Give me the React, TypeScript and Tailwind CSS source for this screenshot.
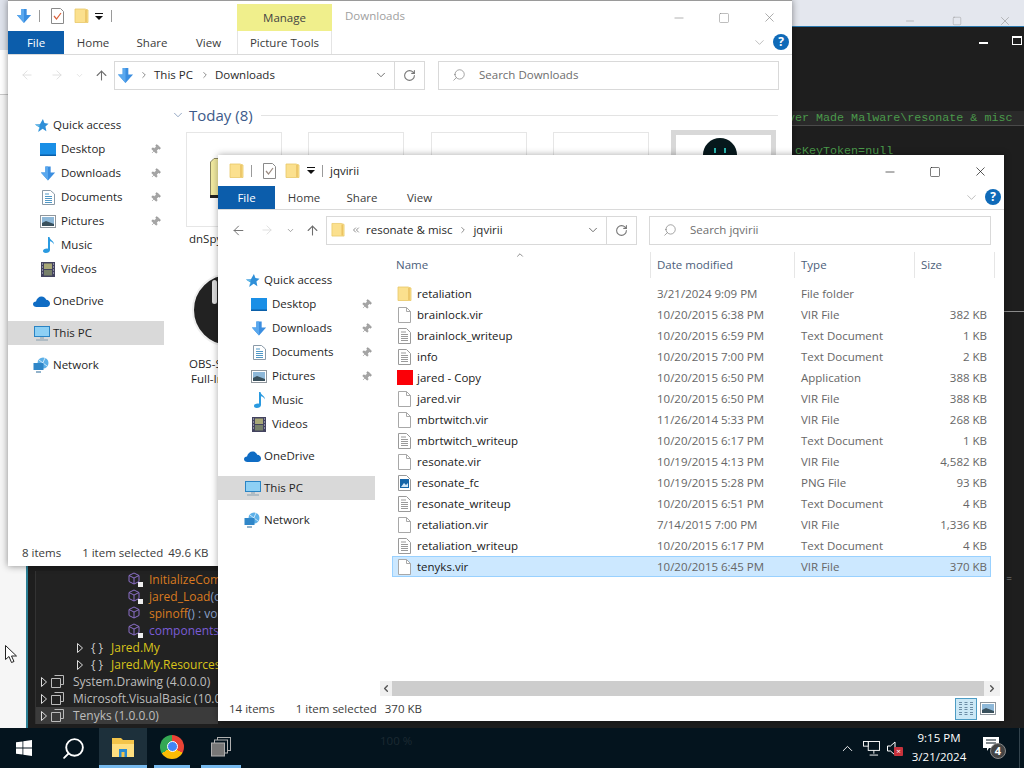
import React from "react";
import { ArrowLeft, ArrowRight, ArrowUp, ChevronDown, ChevronRight, ChevronUp, ChevronLeft, RotateCw, Search, Minus, Square, X, Pin, ChevronsLeft } from "lucide-react";

const FolderIcon = ({ c = "w-[15px] h-[16px]" }: { c?: string }) => (
  <svg viewBox="0 0 15 16" className={c}>
    <path d="M1 1h10l3 1v12.5H1z" fill="#fbe08e" stroke="#e8c868" strokeWidth="0.8" />
    <path d="M12 2v12" stroke="#e9c05f" strokeWidth="1.5" />
  </svg>
);
const DownIcon = ({ c = "w-[18px] h-[18px]" }: { c?: string }) => (
  <svg viewBox="0 0 18 18" className={c}>
    <path d="M6 1h6v7h5l-8 9-8-9h5z" fill="#3b8ee0" />
    <path d="M6 1h3v16l-8-9h5z" fill="#5aa8ee" />
  </svg>
);
const CheckDoc = ({ active }: { active?: boolean }) => (
  <svg viewBox="0 0 13 16" className="w-[13px] h-[16px]">
    <path d="M.5.5h9l3 3v12H.5z" fill="#fff" stroke="#8a8a8a" />
    <path d="M3 8l2.5 3L10 5" fill="none" stroke={active ? "#d9603a" : "#9a8a80"} strokeWidth="1.2" />
  </svg>
);
const BlankFile = () => (
  <svg viewBox="0 0 13 16" className="w-[13px] h-[16px]">
    <path d="M.5.5h8l4 4v11H.5z" fill="#fff" stroke="#a8a8a8" />
    <path d="M8.5.5v4h4" fill="none" stroke="#a8a8a8" />
  </svg>
);
const TextFile = () => (
  <svg viewBox="0 0 13 16" className="w-[13px] h-[16px]">
    <path d="M.5.5h8l4 4v11H.5z" fill="#fff" stroke="#9a9a9a" />
    <path d="M3 4h5M3 6.5h7M3 8.5h7M3 10.5h7M3 12.5h7" stroke="#8f8f8f" strokeWidth="0.9" />
  </svg>
);
const PngFile = () => (
  <svg viewBox="0 0 13 16" className="w-[13px] h-[16px]">
    <path d="M.5.5h8l4 4v11H.5z" fill="#fff" stroke="#9a9a9a" />
    <rect x="2" y="4" width="9" height="9" fill="#1565a8" />
    <path d="M3 12l3-4 2 2 2-2v4z" fill="#cfe6f8" />
  </svg>
);
const RedApp = () => <div className="w-4 h-[15px] bg-[#fb0007]" />;
const StarIcon = () => (
  <svg viewBox="0 0 16 16" className="w-[15px] h-[15px]">
    <path d="M9.5 1l1.6 4.4L15.5 6l-3.3 3 1 5-4-2.6L4.5 15l1.3-5L1 7l5.3-.3z" fill="#2f8fd8" />
    <path d="M1 7l5 .5L4.5 15l1.8-5z" fill="#63bce8" />
  </svg>
);
const DesktopIcon = () => (
  <svg viewBox="0 0 16 13" className="w-4 h-[13px]">
    <rect width="16" height="13" fill="#1a8fe6" />
    <rect y="11.5" width="16" height="1.5" fill="#0b5fa8" />
  </svg>
);
const DocsIcon = () => (
  <svg viewBox="0 0 13 15" className="w-[13px] h-[15px]">
    <path d="M.5.5h8l4 3.500v10.500H.5z" fill="#fff" stroke="#8a9aa8" />
    <path d="M3 4h4M3 6.500h7M3 8.500h7M3 10.500h7M3 12.500h7" stroke="#3d8cbf" strokeWidth="0.9" />
  </svg>
);
const PicsIcon = () => (
  <svg viewBox="0 0 16 13" className="w-4 h-[13px]">
    <rect x=".5" y=".5" width="15" height="12" fill="#fff" stroke="#8f969c" />
    <rect x="2" y="2" width="12" height="9" fill="#8eb8d8" />
    <path d="M2 8l4-2 8 3v2H2z" fill="#39505c" />
  </svg>
);
const MusicIcon = () => (
  <svg viewBox="0 0 13 16" className="w-[13px] h-4">
    <path d="M6 0h1.500c.3 3 4.500 3.500 4.500 7.500-.8-2-2.700-3-4-3.300V13c0 2-2 3-4.200 3C1.700 16 1 14.800 1 14c0-1.600 2.400-2.800 5-2.300z" fill="#2a9ae0" />
  </svg>
);
const VideoIcon = () => (
  <svg viewBox="0 0 14 15" className="w-[14px] h-[15px]">
    <rect width="14" height="15" fill="#43435f" />
    <rect x="3" y="1.500" width="8" height="5.500" fill="#a8a878" />
    <rect x="3" y="8" width="8" height="5.500" fill="#77806a" />
    <path d="M1 2h1M1 5h1M1 8h1M1 11h1M12 2h1M12 5h1M12 8h1M12 11h1" stroke="#d8d8e8" strokeWidth="1.200" />
  </svg>
);
const CloudIcon = () => (
  <svg viewBox="0 0 17 11" className="w-[17px] h-[11px]">
    <path d="M3.500 11C1.500 11 0 9.800 0 8.200 0 6.600 1.300 5.500 3 5.500 3.500 2.500 6 .5 8.500.5c2.300 0 4 1.300 4.700 3.300 2.200.1 3.800 1.700 3.800 3.600 0 2-1.500 3.600-3.500 3.600z" fill="#0f6cc4" />
  </svg>
);
const PCIcon = () => (
  <svg viewBox="0 0 16 15" className="w-4 h-[15px]">
    <rect x=".5" y=".5" width="15" height="10" fill="#8ed0f4" stroke="#2a84c4" />
    <path d="M6 12h4M2 14h12" stroke="#88a0b0" strokeWidth="1.200" />
  </svg>
);
const NetIcon = () => (
  <svg viewBox="0 0 17 16" className="w-[17px] h-4">
    <circle cx="10" cy="6" r="5.500" fill="#5cb0e8" />
    <path d="M6 3l8 6M12 1l-4 9" stroke="#e8f4fc" strokeWidth="0.8" />
    <rect x=".5" y="6" width="10" height="7" fill="#2f86c8" />
    <path d="M3 15h5" stroke="#4a80a8" strokeWidth="1.200" />
  </svg>
);

const navPinned: [string, React.ReactNode][] = [
  ["Desktop", <DesktopIcon />],
  ["Downloads", <DownIcon c="w-4 h-[17px]" />],
  ["Documents", <DocsIcon />],
  ["Pictures", <PicsIcon />],
];
const navPlain: [string, React.ReactNode][] = [
  ["Music", <MusicIcon />],
  ["Videos", <VideoIcon />],
];

function NavPane({ w, front }: { w: string; front?: boolean }) {
  const top = `h-6 flex items-center gap-[3px] text-[#1f1f1f] ${front ? "pl-[26px]" : "pl-[25px]"}`;
  const sub = `h-6 flex items-center text-[#1f1f1f] ${front ? "pl-[33px]" : "pl-[32px]"}`;
  const icoBox = "w-[16px] flex justify-center mr-[5px]";
  const topIco = "w-[17px] flex justify-center";
  return (
    <div className={`${w} shrink-0 pt-[18px] flex flex-col`}>
      <div className={top}>
        <span className={topIco}><StarIcon /></span>
        <span>Quick access</span>
      </div>
      {navPinned.map(([n, i]) => (
        <div key={n} className={sub}>
          <span className={icoBox}>{i}</span>
          <span className="flex-1">{n}</span>
          <Pin size={11} strokeWidth={1.2} className="text-[#8d8d8d] fill-[#a5a5a5] mr-[3px] rotate-45" />
        </div>
      ))}
      {navPlain.map(([n, i]) => (
        <div key={n} className={sub}>
          <span className={icoBox}>{i}</span>
          <span>{n}</span>
        </div>
      ))}
      <div className={`${top} mt-2`}>
        <span className={topIco}><CloudIcon /></span>
        <span>OneDrive</span>
      </div>
      <div className={`${top} mt-2 bg-[#d9d9d9]`}>
        <span className={topIco}><PCIcon /></span>
        <span>This PC</span>
      </div>
      <div className={`${top} mt-2`}>
        <span className={topIco}><NetIcon /></span>
        <span>Network</span>
      </div>
    </div>
  );
}

function WinControls({ active }: { active?: boolean }) {
  const c = active ? "text-[#111] right-[16px]" : "text-[#888] right-[15px]";
  return (
    <div className={`flex items-center ${c} absolute top-[9px] gap-[31px]`}>
      <Minus size={14} strokeWidth={1.1} />
      <Square size={12} strokeWidth={1.1} className="mx-[1px]" />
      <X size={15} strokeWidth={1.1} />
    </div>
  );
}

const Help = () => (
  <div className="w-4 h-4 rounded-full bg-[#0f6ab8] text-white text-[12px] font-bold flex items-center justify-center">?</div>
);
const DropTick = () => (
  <svg viewBox="0 0 8 7" className="w-2 h-[7px]">
    <path d="M0 0h8v1H0zM0 3h8L4 7z" fill="#111" />
  </svg>
);
const Sep = () => <div className="w-px h-[12px] bg-[#9a9a9a]" />;

function Tabs({ pos }: { pos: number[] }) {
  const [fw, h, s, v] = pos;
  return (
    <div className="flex h-[23px] text-[#3b3b3b] text-center items-center">
      <div style={{ width: fw }} className="bg-[#0c5dab] text-white h-full flex items-center justify-center">File</div>
      <div style={{ width: h }}>Home</div>
      <div style={{ width: s }}>Share</div>
      <div style={{ width: v }}>View</div>
    </div>
  );
}

const Box = "h-[29px] border border-[#d9d9d9] flex items-center";

function BackWindow() {
  const tops = ["w-[96px] mr-[26px]", "w-[96px] mr-[27px]", "w-[96px] mr-[26px]", "w-[96px] mr-[22px]"];
  return (
    <div className="absolute left-2 top-0 w-[784px] h-[566px] bg-white border-t border-[#9a9a9a] shadow-[0_0_7px_rgba(0,0,0,0.45)] flex flex-col">
      <div className="relative h-[30px] flex items-center pl-[8px] shrink-0">
        <DownIcon c="w-[16px] h-[16px]" />
        <div className="ml-[7px] mr-[11px]"><Sep /></div>
        <CheckDoc active />
        <div className="ml-[10px]"><FolderIcon /></div>
        <div className="ml-[6px] mr-[8px]"><DropTick /></div>
        <Sep />
        <div className="ml-[125px] w-[95px] h-[27px] mt-[3px] bg-[#f0ef8c] text-[#444] flex items-center justify-center">Manage</div>
        <div className="ml-[13px] text-[#a0a0a0]">Downloads</div>
        <WinControls />
      </div>
      <div className="relative h-[24px] border-b border-[#dadada] shrink-0">
        <Tabs pos={[56, 58, 60, 53]} />
        <div className="absolute left-[229px] top-0 w-[95px] h-full border-x border-[#e4e4e4] flex items-center justify-center text-[#3b3b3b]">Picture Tools</div>
        <div className="absolute right-[3px] top-[3px] flex items-center gap-[6px]">
          <ChevronDown size={15} strokeWidth={1} className="text-[#999]" />
          <Help />
        </div>
      </div>
      <div className="h-[40px] flex items-center shrink-0 text-[#2a2a2a]">
        <div className="w-[106px] flex items-center pl-[12px] text-[#dcdcdc]">
          <ArrowLeft size={14} strokeWidth={1.5} />
          <ArrowRight size={14} strokeWidth={1.5} className="ml-[16px]" />
          <ChevronDown size={9} className="ml-[11px]" />
          <ArrowUp size={15} strokeWidth={1.7} className="ml-[10px] text-[#6e6e6e]" />
        </div>
        <div className={`${Box} w-[311px]`}>
          <div className="w-[24px] pl-[2px]"><DownIcon c="w-[17px] h-[17px]" /></div>
          <ChevronRight size={10} className="text-[#777]" />
          <span className="ml-[5px]">This PC</span>
          <ChevronRight size={10} className="ml-[7px] text-[#777]" />
          <span className="ml-[5px] flex-1">Downloads</span>
          <ChevronDown size={14} strokeWidth={1.6} className="mr-[6px] text-[#666]" />
          <div className="w-[30px] h-full border-l border-[#d9d9d9] flex items-center justify-center">
            <RotateCw size={13} className="text-[#777]" />
          </div>
        </div>
        <div className={`${Box} ml-[13px] w-[341px]`}>
          <Search size={14} strokeWidth={1} className="ml-[13px] -scale-x-100 text-[#666]" />
          <span className="ml-[13px] text-[#6e6e6e]">Search Downloads</span>
        </div>
      </div>
      <div className="flex-1 flex min-h-0">
        <NavPane w="w-[156px]" />
        <div className="flex-1 pl-[7px] pt-[7px] overflow-hidden">
          <div className="flex items-center h-[26px]">
            <ChevronDown size={14} strokeWidth={1} className="text-[#4a6a9a] w-[14px]" />
            <span className="ml-[4px] text-[15px] text-[#3d5a8a]">Today (8)</span>
            <div className="flex-1 h-px bg-[#e3e3e3] ml-[8px] mr-[14px]" />
          </div>
          <div className="flex pl-[15px] pt-[4px]">
            {tops.map((c, i) => (
              <div key={i} className={`${c} h-[95px] border border-[#e6e6e6] flex`}>
                {i === 0 && (
                  <svg viewBox="0 0 24 40" className="w-[24px] h-[40px] mt-[25px] ml-[23px]">
                    <path d="M.5 4L4 .5h19v39H.5z" fill="#f1eaa0" stroke="#8a8660" />
                    <rect x="0" y="37" width="24" height="3" fill="#222" />
                  </svg>
                )}
              </div>
            ))}
            <div className="w-[105px] h-[95px] -mt-[2px] border-[5px] border-[#d8d8d8] flex justify-center bg-white">
              <div className="w-[34px] h-[34px] rounded-full bg-[#06181c] mt-[3px] -ml-[7px] flex items-start justify-center gap-[8px] pt-[10px]">
                <div className="w-[2px] h-[5px] bg-[#28b8b0]" />
                <div className="w-[2px] h-[5px] bg-[#28b8b0]" />
              </div>
            </div>
          </div>
          <div className="pl-[18px] pt-[3px] text-[#1f1f1f] h-[20px]">dnSpy</div>
          <div className="ml-[21px] mt-[26px] w-[74px] h-[74px] rounded-full bg-[#222] border-[2px] border-[#eeeeee] pl-[18px] pt-[5px]">
            <div className="w-[5px] h-[24px] bg-[#dddddd] rounded-full" />
          </div>
          <div className="pl-[18px] pt-[9px] text-[#1f1f1f] leading-[15px]">
            <div>OBS-Studio</div>
            <div className="pl-[2px]">Full-Installer</div>
          </div>
        </div>
      </div>
      <div className="h-[26px] flex items-center text-[#3b3b3b] shrink-0 pl-[14px] pb-[1px]">
        <span>8 items</span>
        <span className="ml-[21px]">1 item selected</span>
        <span className="ml-[5px]">49.6 KB</span>
      </div>
    </div>
  );
}

type Row = [string, string, string, string, React.ReactNode, boolean?];
const rows: Row[] = [
  ["retaliation", "3/21/2024 9:09 PM", "File folder", "", <FolderIcon />],
  ["brainlock.vir", "10/20/2015 6:38 PM", "VIR File", "382 KB", <BlankFile />],
  ["brainlock_writeup", "10/20/2015 6:59 PM", "Text Document", "1 KB", <TextFile />],
  ["info", "10/20/2015 7:00 PM", "Text Document", "2 KB", <TextFile />],
  ["jared - Copy", "10/20/2015 6:50 PM", "Application", "388 KB", <RedApp />],
  ["jared.vir", "10/20/2015 6:50 PM", "VIR File", "388 KB", <BlankFile />],
  ["mbrtwitch.vir", "11/26/2014 5:33 PM", "VIR File", "268 KB", <BlankFile />],
  ["mbrtwitch_writeup", "10/20/2015 6:17 PM", "Text Document", "1 KB", <TextFile />],
  ["resonate.vir", "10/19/2015 4:13 PM", "VIR File", "4,582 KB", <BlankFile />],
  ["resonate_fc", "10/19/2015 5:28 PM", "PNG File", "93 KB", <PngFile />],
  ["resonate_writeup", "10/20/2015 6:51 PM", "Text Document", "4 KB", <TextFile />],
  ["retaliation.vir", "7/14/2015 7:00 PM", "VIR File", "1,336 KB", <BlankFile />],
  ["retaliation_writeup", "10/20/2015 6:17 PM", "Text Document", "4 KB", <TextFile />],
  ["tenyks.vir", "10/20/2015 6:45 PM", "VIR File", "370 KB", <BlankFile />, true],
];

function FrontWindow() {
  const cols = "grid grid-cols-[259px_144px_120px_76px] w-[599px]";
  return (
    <div className="absolute left-[218px] top-[155px] w-[786px] h-[566px] bg-white shadow-[0_0_7px_rgba(0,0,0,0.35)] flex flex-col">
      <div className="relative h-[31px] flex items-center pl-[11px] shrink-0">
        <FolderIcon />
        <div className="ml-[7px] mr-[11px]"><Sep /></div>
        <CheckDoc />
        <div className="ml-[9px]"><FolderIcon /></div>
        <div className="ml-[7px] mr-[7px]"><DropTick /></div>
        <Sep />
        <span className="ml-[7px] text-[#222]">jqvirii</span>
        <WinControls active />
      </div>
      <div className="relative h-[24px] border-b border-[#dadada] shrink-0">
        <Tabs pos={[57, 58, 58, 57]} />
        <div className="absolute right-[3px] top-[3px] flex items-center gap-[6px]">
          <ChevronDown size={15} strokeWidth={1} className="text-[#999]" />
          <Help />
        </div>
      </div>
      <div className="h-[40px] flex items-center shrink-0 text-[#2a2a2a]">
        <div className="w-[108px] flex items-center pl-[13px] text-[#dcdcdc]">
          <ArrowLeft size={15} strokeWidth={1.6} className="text-[#757575]" />
          <ArrowRight size={14} strokeWidth={1.5} className="ml-[14px]" />
          <ChevronDown size={9} strokeWidth={2} className="ml-[12px] text-[#888]" />
          <ArrowUp size={15} strokeWidth={1.7} className="ml-[10px] text-[#6e6e6e]" />
        </div>
        <div className={`${Box} w-[311px]`}>
          <div className="w-[21px] pl-[4px]"><FolderIcon c="w-[14px] h-[16px]" /></div>
          <ChevronsLeft size={10} className="text-[#777] ml-[3px]" />
          <span className="ml-[5px]">resonate &amp; misc</span>
          <ChevronRight size={10} className="ml-[6px] text-[#777]" />
          <span className="ml-[5px] flex-1">jqvirii</span>
          <ChevronDown size={14} strokeWidth={1.6} className="mr-[6px] text-[#666]" />
          <div className="w-[30px] h-full border-l border-[#d9d9d9] flex items-center justify-center">
            <RotateCw size={13} className="text-[#777]" />
          </div>
        </div>
        <div className={`${Box} ml-[12px] w-[342px]`}>
          <Search size={14} strokeWidth={1} className="ml-[13px] -scale-x-100 text-[#666]" />
          <span className="ml-[13px] text-[#6e6e6e]">Search jqvirii</span>
        </div>
      </div>
      <div className="flex-1 flex min-h-0">
        <NavPane w="w-[157px]" front />
        <div className="flex-1 flex flex-col min-w-0 pl-[5px]">
          <div className="relative pl-[12px] flex-1 min-h-0">
            <div className={`${cols} h-[33px] pt-[2px] text-[#4c607a] relative`}>
              <div className="pl-[4px] flex items-center border-r border-[#e6e6e6] h-[26px]">Name</div>
              <div className="pl-[6px] flex items-center border-r border-[#e6e6e6] h-[26px]">Date modified</div>
              <div className="pl-[6px] flex items-center border-r border-[#e6e6e6] h-[26px]">Type</div>
              <div className="pl-[6px] flex items-center border-r border-[#e6e6e6] h-[26px] w-[80px]">Size</div>
              <ChevronUp size={10} className="absolute left-[123px] top-0 text-[#777]" />
            </div>
            <div>
              {rows.map(([n, d, t, s, ic, sel]) => (
                <div key={n} className={`${cols} h-[21px] items-center ${sel ? "bg-[#cce8ff] outline outline-1 -outline-offset-1 outline-[#99d1ff]" : ""}`}>
                  <div className="flex items-center text-[#1a1a1a]">
                    <span className="w-[25px] flex justify-center shrink-0">{ic}</span>
                    <span>{n}</span>
                  </div>
                  <div className="pl-[6px] text-[#666]">{d}</div>
                  <div className="pl-[6px] text-[#666]">{t}</div>
                  <div className="pr-[4px] text-right text-[#666]">{s}</div>
                </div>
              ))}
            </div>
          </div>
        </div>
      </div>
      <div className="h-[15px] ml-[162px] mr-[4px] flex items-center bg-[#f0f0f0] shrink-0">
        <ChevronLeft size={11} strokeWidth={3} className="w-[12px] text-[#555]" />
        <div className="flex-1 h-full bg-[#cdcdcd]" />
        <ChevronRight size={11} strokeWidth={3} className="w-[16px] text-[#555]" />
      </div>
      <div className="h-[25px] flex items-center text-[#3b3b3b] shrink-0 pl-[11px]">
        <span>14 items</span>
        <span className="ml-[21px]">1 item selected</span>
        <span className="ml-[8px] flex-1">370 KB</span>
        <div className="w-[22px] h-[22px] bg-[#cbe8f6] border border-[#4d9cc4] flex flex-col justify-center gap-[2px] px-[3px]">
          <div className="h-[3px] border-y border-[#6d8ea6] border-dashed" />
          <div className="h-[3px] border-y border-[#6d8ea6] border-dashed" />
          <div className="h-[3px] border-y border-[#6d8ea6] border-dashed" />
        </div>
        <div className="ml-[3px] mr-[8px]"><PicsIcon /></div>
      </div>
    </div>
  );
}

function TreeRow({ left, icon, text, color, rest, sel }: { left: string; icon: React.ReactNode; text: string; color: string; rest?: string; sel?: boolean }) {
  return (
    <div className={`h-[17px] flex items-center whitespace-nowrap overflow-hidden ${sel ? "bg-[#3b3b3b]" : ""}`}>
      <div className={`${left} shrink-0 flex items-center justify-end gap-[4px]`}>{icon}</div>
      <span className={color}>{text}</span>
      {rest && <span className="text-[#8aa0c8]">{rest}</span>}
    </div>
  );
}
const Cube = ({ lock }: { lock?: boolean }) => (
  <svg viewBox="0 0 18 16" className="w-[18px] h-4">
    <path d="M7 1l5 2.500v6L7 12 2 9.500v-6zM2 3.500L7 6l5-2.500M7 6v6" fill="none" stroke="#8b6fc8" />
    {lock && <rect x="11" y="10" width="5" height="5" fill="#eee" />}
  </svg>
);
const Tri = () => (
  <svg viewBox="0 0 6 10" className="w-[6px] h-[10px]"><path d="M.5.5l5 4.500-5 4.500z" fill="none" stroke="#ddd" /></svg>
);
const Asm = () => (
  <svg viewBox="0 0 13 13" className="w-[13px] h-[13px]"><path d="M3.500.5h9v9h-3M.5 3.500h9v9h-9z" fill="none" stroke="#bbb" /></svg>
);

function DarkBackground() {
  return (
    <div className="absolute left-[26px] top-0 right-0 bottom-0 flex flex-col">
      <div className="h-[26px] bg-[#e4e7ee] relative shrink-0 ml-[740px]">
        <div className="absolute left-[138px] top-[14px] flex items-center gap-[36px] text-[#8f8f8f]">
          <Minus size={12} strokeWidth={1} />
          <Square size={10} strokeWidth={1} />
          <X size={14} strokeWidth={1} />
        </div>
      </div>
      <div className="h-[1px] bg-[#2c7ab0] shrink-0 ml-[740px]" />
      <div className="flex-1 bg-[#1e1e1e] border-l-2 border-[#2b7f95] relative">
        <div className="absolute right-[36px] top-[15px] w-[9px] h-[2px] bg-white" />
        <div className="absolute right-[2px] top-[9px] w-[10px] h-[9px] border border-white border-t-[2px]" />
        <div className="absolute left-[760px] right-0 top-[84px] h-[15px] bg-[#2a2a2a] border-b border-[#4a4a4a] font-['Liberation_Mono',monospace] text-[11.7px] leading-[15px] text-[#4a9a4a] whitespace-nowrap overflow-hidden">
          <span>ver Made Malware\resonate &amp; misc</span>
        </div>
        <div className="absolute left-[767px] top-[116px] font-['Liberation_Mono',monospace] text-[11.7px] text-[#4a9a4a]">cKeyToken=null</div>
        <div className="absolute right-0 top-[284px] w-5 h-px bg-[#8a8a8a]" />
        <div className="absolute right-[12px] top-[544px] text-[#888] text-[10px]">=</div>
        <div className="absolute left-[7px] top-[544px] w-[183px] flex flex-col text-[12px] border-l border-[#333] bg-[#222]">
          <TreeRow left="w-[113px] pr-[4px]" icon={<Cube lock />} text="InitializeCom" color="text-[#d97a20]" />
          <TreeRow left="w-[113px] pr-[4px]" icon={<Cube lock />} text="jared_Load" color="text-[#d97a20]" rest="(o" />
          <TreeRow left="w-[113px] pr-[4px]" icon={<Cube />} text="spinoff" color="text-[#d97a20]" rest="() : vo" />
          <TreeRow left="w-[113px] pr-[4px]" icon={<Cube lock />} text="components" color="text-[#7a5cd6]" />
          <TreeRow left="w-[75px] pr-[4px]" icon={<><Tri /><span className="text-[#ccc] px-[4px]">{"{ }"}</span></>} text="Jared.My" color="text-[#d9c41a]" />
          <TreeRow left="w-[75px] pr-[4px]" icon={<><Tri /><span className="text-[#ccc] px-[4px]">{"{ }"}</span></>} text="Jared.My.Resources" color="text-[#d9c41a]" />
          <TreeRow left="w-[37px] pr-[9px]" icon={<><Tri /><Asm /></>} text="System.Drawing (4.0.0.0)" color="text-[#bdbdbd]" />
          <TreeRow left="w-[37px] pr-[9px]" icon={<><Tri /><Asm /></>} text="Microsoft.VisualBasic (10.0." color="text-[#bdbdbd]" />
          <TreeRow left="w-[37px] pr-[9px]" icon={<><Tri /><Asm /></>} text="Tenyks (1.0.0.0)" color="text-[#bdbdbd]" sel />
        </div>
      </div>
    </div>
  );
}

function Taskbar() {
  const underline = "border-b-[3px] border-[#76b9ed]";
  return (
    <div className="h-10 bg-[#04141e] flex items-center text-white shrink-0 relative z-20 text-[11.5px]">
      <div className="w-[48px] flex justify-center">
        <svg viewBox="0 0 16 16" className="w-4 h-4"><path d="M0 2.300L6.500 1.400V7.600H0zM7.300 1.300L16 0V7.600H7.300zM0 8.400H6.500V14.600L0 13.700zM7.300 8.400H16V16L7.300 14.700z" fill="#fff" /></svg>
      </div>
      <div className="w-[51px] flex justify-center"><Search size={25} strokeWidth={1.8} className="-scale-x-100" /></div>
      <div className={`w-[48px] h-full flex items-center justify-center bg-[#1d303b] ${underline}`}>
        <svg viewBox="0 0 22 20" className="w-[22px] h-5">
          <path d="M0 1h9l2 2h11v17H0z" fill="#f3c44a" />
          <rect x="0" y="7" width="22" height="13" fill="#ffdf80" />
          <rect x="7" y="12" width="8" height="8" fill="#2a8ad0" />
          <rect x="9.500" y="15" width="3" height="5" fill="#f3c44a" />
        </svg>
      </div>
      <div className="w-[50px] flex justify-center h-full items-center">
        <div className={`w-[36px] h-full flex items-center justify-center ${underline}`}>
          <div className="w-6 h-6 rounded-full bg-[conic-gradient(#ea4335_0_33%,#fbbc05_33%_66%,#34a853_66%_100%)] flex items-center justify-center">
            <div className="w-[11px] h-[11px] rounded-full bg-[#4285f4] border border-white" />
          </div>
        </div>
      </div>
      <div className={`w-[40px] ml-[4px] h-full flex items-center justify-center ${underline}`}>
        <svg viewBox="0 0 20 20" className="w-5 h-5 text-[#b0b0b0]" fill="none" stroke="currentColor">
          <rect x="6.500" y=".5" width="13" height="13" />
          <rect x="3.500" y="3" width="13" height="13" fill="#04141e" />
          <rect x=".5" y="6" width="13" height="13" fill="#777" />
        </svg>
      </div>
      <span className="ml-[139px] mb-[14px] text-[#1c2a32]">100 %</span>
      <div className="flex-1" />
      <ChevronUp size={17} strokeWidth={1.3} />
      <svg viewBox="0 0 18 16" className="w-[17px] h-[15px] ml-[7px]" fill="none" stroke="#fff">
        <rect x="5.500" y=".5" width="12" height="9.500" />
        <rect x=".5" y=".5" width="5" height="5" fill="#04141e" />
        <path d="M11.500 10v3.500M7 15h9" />
      </svg>
      <div className="ml-[7px] relative w-[16px] h-[15px]">
        <svg viewBox="0 0 9 15" className="w-[9px] h-[15px]" fill="none" stroke="#fff"><path d="M.5 5h3L8 1v13L3.500 10h-3z" /></svg>
        <div className="absolute left-[7px] top-[6px] w-[9px] h-[9px] bg-[#c8323c] rounded-[1px] text-[8px] leading-[8px] text-center">×</div>
      </div>
      <div className="w-[64px] ml-[4px] text-center leading-[19px] mb-[2px]">
        <div>9:15 PM</div>
        <div>3/21/2024</div>
      </div>
      <div className="relative w-[24px] h-[22px] ml-[12px] mr-[17px]">
        <svg viewBox="0 0 16 14" className="w-[16px] h-[14px]"><path d="M0 0h16v11H6l-2 3v-3H0z" fill="#fff" /><path d="M3 3h10M3 6h10" stroke="#04141e" /></svg>
        <div className="absolute left-[7px] top-[6px] w-4 h-4 rounded-full bg-[#444] border border-[#888] text-[11px] leading-[14px] font-bold text-center">4</div>
      </div>
      <div className="absolute right-[4px] top-0 h-full w-px bg-[#33434c]" />
    </div>
  );
}

export default function App() {
  return (
    <div className="w-[1024px] h-[768px] overflow-hidden flex flex-col font-['Open_Sans','Liberation_Sans',sans-serif] text-[11.5px] bg-white">
      <div className="relative flex-1 bg-[#f6f6f6] min-h-0">
        <div className="h-[50px] bg-[#dfe3ec]" />
        <div className="h-[45px] bg-white border-b border-[#c8c8c8]" />
        <DarkBackground />
        <BackWindow />
        <FrontWindow />
        <svg viewBox="0 0 12 18" className="absolute left-[5px] top-[645px] w-3 h-[18px]">
          <path d="M.5.5v14l3.500-3 2.500 6 2.500-1-2.500-5.500h5z" fill="#fff" stroke="#222" />
        </svg>
      </div>
      <Taskbar />
    </div>
  );
}
